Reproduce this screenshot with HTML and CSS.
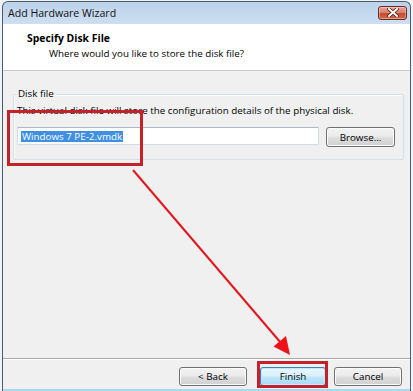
FILE: index.html
```html
<!DOCTYPE html>
<html>
<head>
<meta charset="utf-8">
<link rel="stylesheet" href="styles.css">
</head>
<body>
<div class="window">
  <div class="titlebar">
    <span class="title">Add Hardware Wizard</span>
    <span class="close">
      <svg width="12" height="9" viewBox="0 0 12 9"><path d="M2 1 L10 8 M10 1 L2 8" stroke="#4a1a12" stroke-width="3.4" stroke-linecap="square"/><path d="M2 1 L10 8 M10 1 L2 8" stroke="#ffffff" stroke-width="2" stroke-linecap="square"/></svg>
    </span>
  </div>
  <div class="client">
    <div class="header">
      <div class="h-title">Specify Disk File</div>
      <div class="h-sub">Where would you like to store the disk file?</div>
    </div>
    <div class="content">
      <fieldset class="group">
        <legend>Disk file</legend>
        <div class="desc">This virtual disk file will store the configuration details of the physical disk.</div>
        <div class="file-row">
          <div class="input"><span class="sel">Windows 7 PE-2.vmdk</span></div>
          <div class="btn browse">Browse...</div>
        </div>
      </fieldset>
    </div>
    <div class="footer">
      <div class="btn back">&lt; Back</div>
      <div class="btn default finish">Finish</div>
      <div class="btn cancel">Cancel</div>
    </div>
  </div>
</div>
<svg class="annot" width="413" height="391" viewBox="0 0 413 391">
  <rect x="8.5" y="111.5" width="133" height="53" fill="none" stroke="#c3222b" stroke-width="3"/>
  <rect x="258.5" y="362.5" width="68" height="24" fill="none" stroke="#c3222b" stroke-width="3"/>
  <line x1="133" y1="170" x2="281" y2="343" stroke="#e3161d" stroke-width="2"/>
  <polygon points="290,355 273.5,346.5 286,336" fill="#ee1218"/>
</svg>
</body>
</html>
```
FILE: styles.css
```css
html, body {
  margin: 0;
  padding: 0;
}
body {
  width: 413px;
  height: 391px;
  overflow: hidden;
  background: #eef3f9;
  font-family: "Open Sans", "Noto Sans", sans-serif;
  color: #000;
  position: relative;
}
.window {
  box-sizing: border-box;
  margin: 1px 0 0 2px;
  width: 409px;
  height: 390px;
  border: 1px solid #4d5b6a;
  border-bottom: none;
  border-radius: 6px 6px 0 0;
  background: linear-gradient(#bcd2ea, #d4e3f3 30px, #c9def0 70%, #a7d9f2);
  display: flex;
  flex-direction: column;
}
.titlebar {
  height: 22px;
  flex: none;
  display: flex;
  align-items: center;
  justify-content: space-between;
  padding: 0 2px 0 5px;
}
.title {
  font-size: 10.6px;
  color: #111;
  margin-top: -1px;
}
.close {
  width: 29px;
  height: 14px;
  box-sizing: border-box;
  border: 1px solid #6b2a1e;
  border-radius: 3px;
  background: linear-gradient(#e7a597, #d88170 45%, #c54a30 55%, #d06a4c);
  box-shadow: inset 0 0 0 1px rgba(255,255,255,0.35);
  display: flex;
  align-items: center;
  justify-content: center;
  margin-top: -1px;
  margin-right: 1px;
}
.client {
  flex: none;
  height: 365px;
  background: #f0f0f0;
  display: flex;
  flex-direction: column;
}
.header {
  flex: none;
  height: 47px;
  box-sizing: border-box;
  background: #fff;
  border-bottom: 1px solid #c8cdd2;
  padding: 7px 0 0 24px;
  line-height: 15px;
}
.h-title {
  font-weight: 700;
  font-size: 10.4px;
}
.h-sub {
  font-size: 9.8px;
  padding-left: 22px;
}
.content {
  flex: 1;
  padding: 16px 7px 0 10px;
}
.group {
  margin: 0;
  padding: 0 8px 12px 3px;
  border: 1px solid #d5dfe5;
  box-shadow: inset 1px 1px 0 #fafafa;
  border-radius: 2px;
  font-size: 9.8px;
}
.group legend {
  padding: 0 2px 0 1px;
  line-height: 14px;
}
.desc {
  line-height: 14px;
  margin-top: 3px;
  white-space: nowrap;
}
.file-row {
  display: flex;
  align-items: flex-start;
  margin-top: 9px;
  gap: 7px;
}
.input {
  box-sizing: border-box;
  width: 302px;
  height: 18px;
  background: #fff;
  border: 1px solid #d3dde8;
  border-top-color: #abb8c7;
  padding: 3px 0 0 3px;
}
.sel {
  display: inline-block;
  background: #3f8fe3;
  color: #fff;
  line-height: 11px;
  height: 11px;
  padding: 0 1px;
  vertical-align: top;
}
.btn {
  box-sizing: border-box;
  border: 1px solid #707070;
  border-radius: 3px;
  background: linear-gradient(#f3f3f3, #ebebeb 45%, #dddddd 55%, #d0d0d0);
  box-shadow: inset 0 0 0 1px #fcfcfc;
  font-size: 9.8px;
  display: flex;
  align-items: center;
  justify-content: center;
}
.browse {
  width: 69px;
  height: 20px;
}
.footer {
  flex: none;
  height: 31px;
  box-sizing: border-box;
  border-top: 1px solid #a8a8a8;
  box-shadow: inset 0 1px 0 #ffffff;
  display: flex;
  justify-content: flex-end;
  padding: 8px 8px 0 0;
}
.footer .btn {
  height: 19px;
  width: 68px;
}
.back {
  margin-right: 13px;
}
.finish {
  width: 66px !important;
  margin-right: 8px;
}
.btn.default {
  border-color: #3c7fb1;
  background: linear-gradient(#eaf6fd, #d9f0fc 45%, #bee6fd 55%, #a7d9f5);
  box-shadow: inset 0 0 0 1px #bfe9ff;
}
.annot {
  position: absolute;
  left: 0;
  top: 0;
  pointer-events: none;
}
```
